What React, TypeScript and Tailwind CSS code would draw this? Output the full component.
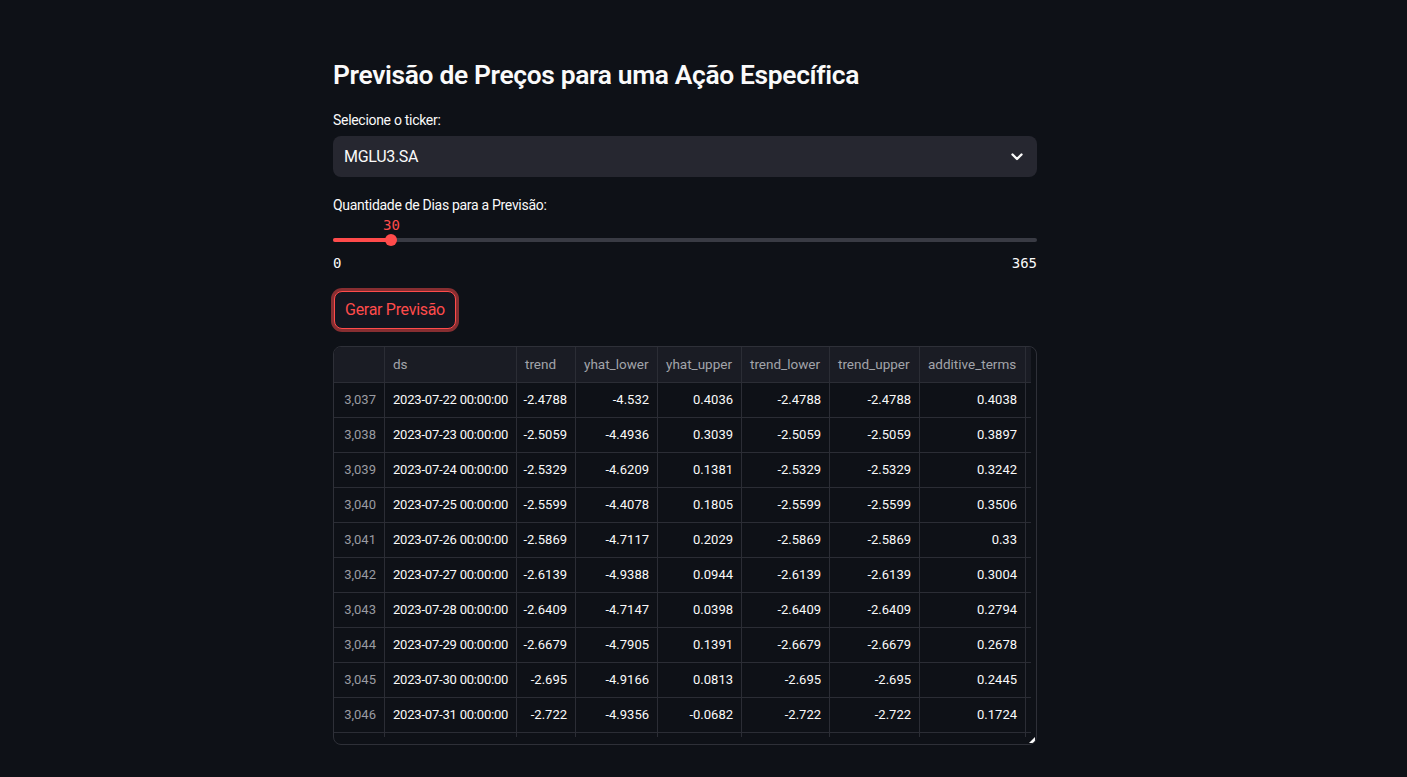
import React from "react";

const cols = [
  { key: "idx", label: "", w: 51, align: "right" },
  { key: "ds", label: "ds", w: 132, align: "left" },
  { key: "trend", label: "trend", w: 59, align: "right" },
  { key: "yl", label: "yhat_lower", w: 82, align: "right" },
  { key: "yu", label: "yhat_upper", w: 84, align: "right" },
  { key: "tl", label: "trend_lower", w: 88, align: "right" },
  { key: "tu", label: "trend_upper", w: 90, align: "right" },
  { key: "at", label: "additive_terms", w: 106, align: "right" },
];

const rows: string[][] = [
  ["3,037", "2023-07-22 00:00:00", "-2.4788", "-4.532", "0.4036", "-2.4788", "-2.4788", "0.4038"],
  ["3,038", "2023-07-23 00:00:00", "-2.5059", "-4.4936", "0.3039", "-2.5059", "-2.5059", "0.3897"],
  ["3,039", "2023-07-24 00:00:00", "-2.5329", "-4.6209", "0.1381", "-2.5329", "-2.5329", "0.3242"],
  ["3,040", "2023-07-25 00:00:00", "-2.5599", "-4.4078", "0.1805", "-2.5599", "-2.5599", "0.3506"],
  ["3,041", "2023-07-26 00:00:00", "-2.5869", "-4.7117", "0.2029", "-2.5869", "-2.5869", "0.33"],
  ["3,042", "2023-07-27 00:00:00", "-2.6139", "-4.9388", "0.0944", "-2.6139", "-2.6139", "0.3004"],
  ["3,043", "2023-07-28 00:00:00", "-2.6409", "-4.7147", "0.0398", "-2.6409", "-2.6409", "0.2794"],
  ["3,044", "2023-07-29 00:00:00", "-2.6679", "-4.7905", "0.1391", "-2.6679", "-2.6679", "0.2678"],
  ["3,045", "2023-07-30 00:00:00", "-2.695", "-4.9166", "0.0813", "-2.695", "-2.695", "0.2445"],
  ["3,046", "2023-07-31 00:00:00", "-2.722", "-4.9356", "-0.0682", "-2.722", "-2.722", "0.1724"],
];

function HeaderRow() {
  return (
    <div className="flex h-[36px] border-b border-[#2b2d35] bg-[#1a1c24]">
      {cols.map((c) => (
        <div
          key={c.key}
          style={{ width: c.w }}
          className="shrink-0 border-r border-[#2b2d35] flex items-center px-[8px] text-[13.5px] text-[#a2a4aa] whitespace-nowrap overflow-hidden"
        >
          {c.label}
        </div>
      ))}
      <div className="w-[5px] shrink-0" />
    </div>
  );
}

function DataRow({ r }: { r: string[] }) {
  return (
    <div className="flex h-[35px] border-b border-[#2b2d35]">
      {cols.map((c, i) => (
        <div
          key={c.key}
          style={{ width: c.w }}
          className={
            "shrink-0 border-r border-[#2b2d35] flex items-center px-[8px] text-[13px] whitespace-nowrap overflow-hidden " +
            (c.align === "right" ? "justify-end " : "justify-start tracking-[-0.2px] ") +
            (i === 0 ? "text-[#9a9ca2]" : "text-[#fafafa]")
          }
        >
          {r[i]}
        </div>
      ))}
      <div className="w-[5px] shrink-0" />
    </div>
  );
}

function TailRow() {
  return (
    <div className="flex h-[4px]">
      {cols.map((c) => (
        <div key={c.key} style={{ width: c.w }} className="shrink-0 border-r border-[#2b2d35]" />
      ))}
    </div>
  );
}

export default function App() {
  return (
    <div
      className="min-h-screen w-full bg-[#0e1117] text-[#fafafa]"
      style={{ fontFamily: "Roboto, 'Noto Sans', sans-serif" }}
    >
      <div className="ml-[333px] w-[704px] pt-[55px] pb-[32px] flex flex-col">
        <h2 className="h-[40px] leading-[40px] text-[26.4px] font-semibold tracking-[-0.35px] whitespace-nowrap">
          Previsão de Preços para uma Ação Específica
        </h2>

        <div className="mt-[15px] h-[20px] leading-[20px] text-[14px] tracking-[-0.3px]">Selecione o ticker:</div>

        <div className="mt-[6px] h-[41px] rounded-lg bg-[#262730] flex items-center justify-between pl-[11px] pr-[14px]">
          <span className="text-[16px] tracking-[-0.3px]">MGLU3.SA</span>
          <svg width="12" height="8" viewBox="0 0 12 8" fill="none">
            <path d="M1.5 1.5 L6 6 L10.5 1.5" stroke="#fafafa" strokeWidth="2.4" strokeLinecap="round" strokeLinejoin="round" />
          </svg>
        </div>

        <div className="mt-[18px] h-[20px] leading-[20px] text-[14px] tracking-[-0.3px]">
          Quantidade de Dias para a Previsão:
        </div>

        <div className="relative h-[56px] w-full">
          <div
            className="absolute top-[2px] left-[50px] w-[16px] text-center text-[14px] leading-[16px] text-[#ff4b4b]"
            style={{ fontFamily: "'DejaVu Sans Mono', 'Liberation Mono', monospace" }}
          >
            30
          </div>
          <div className="absolute top-[23px] left-0 right-0 h-[4px] rounded-full bg-[#393b44]" />
          <div className="absolute top-[23px] left-0 w-[58px] h-[4px] rounded-full bg-[#ff4b4b]" />
          <div className="absolute top-[19px] left-[52px] w-[12px] h-[12px] rounded-full bg-[#ff4b4b]" />
          <div
            className="absolute top-[40px] left-0 right-0 flex justify-between text-[14px] leading-[16px]"
            style={{ fontFamily: "'DejaVu Sans Mono', 'Liberation Mono', monospace" }}
          >
            <span>0</span>
            <span>365</span>
          </div>
        </div>

        <div className="mt-[20px] ml-[1px]">
          <button className="h-[38px] w-[122px] rounded-lg border border-[#ff4b4b] bg-[#131620] text-[16px] text-[#ff4b4b] tracking-[-0.3px] shadow-[0_0_0_3px_rgba(255,75,75,0.5)]">
            Gerar Previsão
          </button>
        </div>

        <div className="relative mt-[17px] h-[399px] w-[704px] rounded-lg border border-[#2e3038] overflow-hidden">
          <div className="w-[697px] flex flex-col">
            <HeaderRow />
            {rows.map((r, i) => (
              <DataRow key={i} r={r} />
            ))}
            <TailRow />
          </div>
          <svg className="absolute right-[1px] bottom-[1px]" width="6" height="6" viewBox="0 0 6 6">
            <path d="M6 0 L6 6 L0 6 Z" fill="#fafafa" />
          </svg>
        </div>
      </div>
    </div>
  );
}
